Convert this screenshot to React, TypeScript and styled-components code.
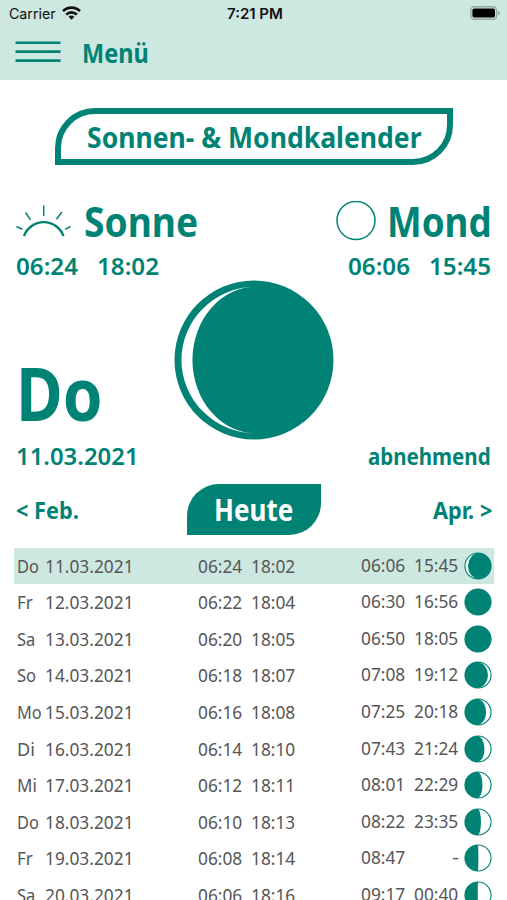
import React, { useLayoutEffect, useRef, useState } from "react";
import styled, { createGlobalStyle } from "styled-components";

const GREEN = "#008375";
const MINT = "#cde7e1";
const GREY = "#565656";

const GlobalStyle = createGlobalStyle`
  *, *::before, *::after { box-sizing: border-box; }
  body { margin: 0; background: #fff; }
`;

const Screen = styled.div`
  width: 507px;
  height: 900px;
  overflow: hidden;
  display: flex;
  flex-direction: column;
  background: #fff;
  color: ${GREEN};
  font-family: "Noto Sans", "Open Sans", sans-serif;
`;

/* Text condensed or stretched horizontally to a given width */
const FitBox = styled.span<{ $width: number; $size: number; $weight: number }>`
  display: block;
  flex: none;
  width: ${(p) => p.$width}px;
  font-size: ${(p) => p.$size}px;
  font-weight: ${(p) => p.$weight};
  line-height: 1;
  white-space: nowrap;
`;
const FitInner = styled.span`
  display: inline-block;
  transform-origin: 0 50%;
  vertical-align: top;
`;

function Fit({ text, width, size, weight = 400 }: { text: string; width: number; size: number; weight?: number }) {
  const ref = useRef<HTMLSpanElement>(null);
  const [scale, setScale] = useState(1);
  useLayoutEffect(() => {
    if (ref.current) setScale(width / ref.current.offsetWidth);
  }, [text, width, size, weight]);
  return (
    <FitBox $width={width} $size={size} $weight={weight}>
      <FitInner ref={ref} style={{ transform: `scaleX(${scale})` }}>{text}</FitInner>
    </FitBox>
  );
}

const Header = styled.header`
  flex: none;
  height: 79.5px;
  background: ${MINT};
`;
const StatusBar = styled.div`
  height: 27px;
  display: grid;
  grid-template-columns: 1fr auto 1fr;
  align-items: center;
  padding: 1px 7px 0 9px;
  color: #111;
  font-family: Inter, sans-serif;
`;
const Carrier = styled.div`
  display: flex;
  align-items: center;
  gap: 6px;
`;
const WifiIcon = styled.svg`
  display: block;
  margin-bottom: 2px;
`;
const BatterySlot = styled.div`
  display: flex;
  justify-content: flex-end;
  padding-bottom: 1.5px;
`;
const MenuButton = styled.button`
  display: flex;
  align-items: center;
  gap: 20.5px;
  height: 50px;
  padding: 0 0 0 15px;
  border: 0;
  background: none;
  color: inherit;
  font-family: inherit;
`;

const Title = styled.h1`
  flex: none;
  align-self: center;
  display: flex;
  align-items: center;
  justify-content: center;
  width: 398px;
  height: 56.5px;
  margin: 28.5px 0 0 1px;
  border: 6px solid ${GREEN};
  border-radius: 40px 0 40px 0;
`;

const Headings = styled.div`
  flex: none;
  display: flex;
  justify-content: space-between;
  height: 44px;
  margin-top: 34.5px;
  padding: 0 15px 0 16px;
`;
const Heading = styled.h2<{ $gap: number }>`
  display: flex;
  align-items: center;
  gap: ${(p) => p.$gap}px;
  margin: 0;
`;

const Hero = styled.section`
  flex: none;
  display: flex;
  justify-content: space-between;
  height: 234px;
  padding: 0 16px 0 16px;
`;
const Side = styled.div<{ $end?: boolean }>`
  display: flex;
  flex-direction: column;
  justify-content: space-between;
  align-items: ${(p) => (p.$end ? "flex-end" : "flex-start")};
  width: 143px;
`;
const Times = styled.div`
  display: flex;
  align-items: center;
  height: 46px;
  gap: 18px;
`;
const Today = styled.div`
  display: flex;
  flex-direction: column;
`;
const Line = styled.div<{ $height: number }>`
  display: flex;
  align-items: center;
  height: ${(p) => p.$height}px;
`;
const BigMoon = styled.svg`
  flex: none;
  width: 160px;
  height: 160px;
  margin-top: 37px;
`;

const MonthNav = styled.nav`
  flex: none;
  display: grid;
  grid-template-columns: 1fr auto 1fr;
  align-items: center;
  height: 66px;
  padding: 0 15.5px 0 16px;
`;
const NavLink = styled.a<{ $end?: boolean }>`
  justify-self: ${(p) => (p.$end ? "end" : "start")};
`;
const TodayButton = styled.button`
  display: flex;
  align-items: center;
  justify-content: center;
  width: 134.5px;
  height: 51px;
  margin-bottom: 1px;
  padding: 1px 1px 0 0;
  border: 0;
  border-radius: 32px 0 32px 0;
  background: ${GREEN};
  color: #fff;
  font-family: inherit;
`;

const Table = styled.div`
  flex: none;
  margin: 4.5px 13.5px 0 14px;
  color: ${GREY};
`;
const Row = styled.div<{ $active: boolean }>`
  display: grid;
  grid-template-columns: 27.5px 153px 163px 102.5px 1fr;
  align-items: center;
  height: 36.6px;
  padding: 0.5px 0 0 3px;
  background: ${(p) => (p.$active ? MINT : "transparent")};
`;
const Pair = styled.div<{ $raised?: boolean }>`
  display: flex;
  justify-content: space-between;
  width: 98px;
  padding-bottom: ${(p) => (p.$raised ? 2 : 0)}px;
`;
const MoonIcon = styled.svg`
  display: block;
  width: 28px;
  height: 28px;
  margin: 0 0 1px 0.5px;
`;

/* Lit part on the given side; edge is the terminator, from -1 (left limb) to 1 (right limb) */
function litPath(c: number, r: number, side: "left" | "right", edge: number) {
  const limb = side === "left" ? 0 : 1;
  const back = edge < 0 ? 1 : 0;
  return `M${c} ${c - r} A${r} ${r} 0 0 ${limb} ${c} ${c + r} A${Math.max(0.01, Math.abs(edge) * r)} ${r} 0 0 ${back} ${c} ${c - r} Z`;
}

type Phase = ["left" | "right", number] | null;
const days: { day: string; dayWidth: number; date: string; sun: [string, string]; moon: [string, string]; phase: Phase }[] = [
  { day: "Do", dayWidth: 22, date: "11.03.2021", sun: ["06:24", "18:02"], moon: ["06:06", "15:45"], phase: ["left", -0.8] },
  { day: "Fr", dayWidth: 15.5, date: "12.03.2021", sun: ["06:22", "18:04"], moon: ["06:30", "16:56"], phase: null },
  { day: "Sa", dayWidth: 18.5, date: "13.03.2021", sun: ["06:20", "18:05"], moon: ["06:50", "18:05"], phase: null },
  { day: "So", dayWidth: 19.5, date: "14.03.2021", sun: ["06:18", "18:07"], moon: ["07:08", "19:12"], phase: ["right", 0.8] },
  { day: "Mo", dayWidth: 24.5, date: "15.03.2021", sun: ["06:16", "18:08"], moon: ["07:25", "20:18"], phase: ["right", 0.65] },
  { day: "Di", dayWidth: 17.5, date: "16.03.2021", sun: ["06:14", "18:10"], moon: ["07:43", "21:24"], phase: ["right", 0.52] },
  { day: "Mi", dayWidth: 20, date: "17.03.2021", sun: ["06:12", "18:11"], moon: ["08:01", "22:29"], phase: ["right", 0.36] },
  { day: "Do", dayWidth: 22, date: "18.03.2021", sun: ["06:10", "18:13"], moon: ["08:22", "23:35"], phase: ["right", 0.24] },
  { day: "Fr", dayWidth: 15.5, date: "19.03.2021", sun: ["06:08", "18:14"], moon: ["08:47", "-"], phase: ["right", 0.03] },
  { day: "Sa", dayWidth: 18.5, date: "20.03.2021", sun: ["06:06", "18:16"], moon: ["09:17", "00:40"], phase: ["right", -0.02] },
];

export default function App() {
  return (
    <>
      <GlobalStyle />
      <Screen>
        <Header>
          <StatusBar>
            <Carrier>
              <Fit text="Carrier" width={47} size={14.5} />
              <WifiIcon width="19" height="14" viewBox="0 0 19 14" fill="none" stroke="#111" strokeWidth="2.6">
                <path d="M1 5.2 C5.7 0.4 13.3 0.4 18 5.2" />
                <path d="M4.1 8.6 C7.1 5.6 11.9 5.6 14.9 8.6" />
                <path d="M6.6 10.7 C8.2 9.2 10.8 9.2 12.4 10.7 L9.5 13.7 Z" fill="#111" stroke="none" />
              </WifiIcon>
            </Carrier>
            <Fit text="7:21 PM" width={56} size={14.2} weight={600} />
            <BatterySlot>
              <svg width="30" height="14" viewBox="0 0 30 14">
                <rect x="0.8" y="0.8" width="25.8" height="12.4" rx="3.6" fill="none" stroke="#96a7a2" strokeWidth="1.4" />
                <rect x="2.4" y="2.4" width="22.6" height="9.2" rx="1.8" fill="#000" />
                <path d="M28 4.6 C30.2 5.5 30.2 8.5 28 9.4 Z" fill="#96a7a2" />
              </svg>
            </BatterySlot>
          </StatusBar>
          <MenuButton>
            <svg width="46" height="22" viewBox="0 0 46 22" stroke={GREEN} strokeWidth="2.6">
              <path d="M0.5 1.7 H45.5 M0.5 10.6 H45.5 M0.5 19.6 H45.5" />
            </svg>
            <Fit text="Menü" width={67} size={27} weight={700} />
          </MenuButton>
        </Header>

        <Title><Fit text="Sonnen- & Mondkalender" width={335} size={29} weight={700} /></Title>

        <Headings>
          <Heading $gap={12.5}>
            <svg width="55" height="32" viewBox="0 0 55 32" fill="none" stroke={GREEN}>
              <path d="M8 31 A21 21 0 0 1 47.5 31" strokeWidth="2.4" />
              <path d="M27.7 0.5 V11 M9.5 7.5 L14.5 14.8 M46 7 L40.5 14.3 M0.5 21.5 L6.3 24.3 M54.5 21.5 L49 24.3" strokeWidth="1.5" />
            </svg>
            <Fit text="Sonne" width={114} size={42} weight={700} />
          </Heading>
          <Heading $gap={11}>
            <svg width="40" height="40" viewBox="0 0 40 40">
              <circle cx="20" cy="19.5" r="19" fill="none" stroke={GREEN} strokeWidth="1.5" />
            </svg>
            <Fit text="Mond" width={105} size={42} weight={700} />
          </Heading>
        </Headings>

        <Hero>
          <Side>
            <Times>
              <Fit text="06:24" width={62.5} size={24} weight={600} />
              <Fit text="18:02" width={62.5} size={24} weight={600} />
            </Times>
            <Today>
              <Line $height={84}><Fit text="Do" width={86.5} size={73} weight={700} /></Line>
              <Line $height={43}><Fit text="11.03.2021" width={122.5} size={24} weight={600} /></Line>
            </Today>
          </Side>
          <BigMoon viewBox="0 0 160 160">
            <circle cx="80" cy="80" r="79.5" fill={GREEN} />
            <path d="M82 6.7 A74.5 73.2 0 0 0 82 153.3 A63.5 73.2 0 0 1 82 6.7 Z" fill="#fff" />
          </BigMoon>
          <Side $end>
            <Times>
              <Fit text="06:06" width={62.5} size={24} weight={600} />
              <Fit text="15:45" width={62.5} size={24} weight={600} />
            </Times>
            <Line $height={43}><Fit text="abnehmend" width={123} size={24} weight={700} /></Line>
          </Side>
        </Hero>

        <MonthNav>
          <NavLink><Fit text="< Feb." width={62.5} size={24} weight={700} /></NavLink>
          <TodayButton><Fit text="Heute" width={79} size={30} weight={700} /></TodayButton>
          <NavLink $end><Fit text="Apr. >" width={59} size={24} weight={700} /></NavLink>
        </MonthNav>

        <Table>
          {days.map((d, i) => (
            <Row key={d.date} $active={i === 0}>
              <Fit text={d.day} width={d.dayWidth} size={18.7} />
              <Fit text={d.date} width={89} size={18.7} />
              <Pair>
                <Fit text={d.sun[0]} width={44.5} size={18.7} />
                <Fit text={d.sun[1]} width={44.5} size={18.7} />
              </Pair>
              <Pair $raised>
                <Fit text={d.moon[0]} width={44.5} size={18.7} />
                <Fit text={d.moon[1]} width={d.moon[1] === "-" ? 7 : 44.5} size={18.7} />
              </Pair>
              <MoonIcon viewBox="0 0 28 28">
                <circle cx="14" cy="14" r="13.6" fill={GREEN} />
                {d.phase && <path d={litPath(14, 12.5, d.phase[0], d.phase[1])} fill="#fff" />}
              </MoonIcon>
            </Row>
          ))}
        </Table>
      </Screen>
    </>
  );
}
